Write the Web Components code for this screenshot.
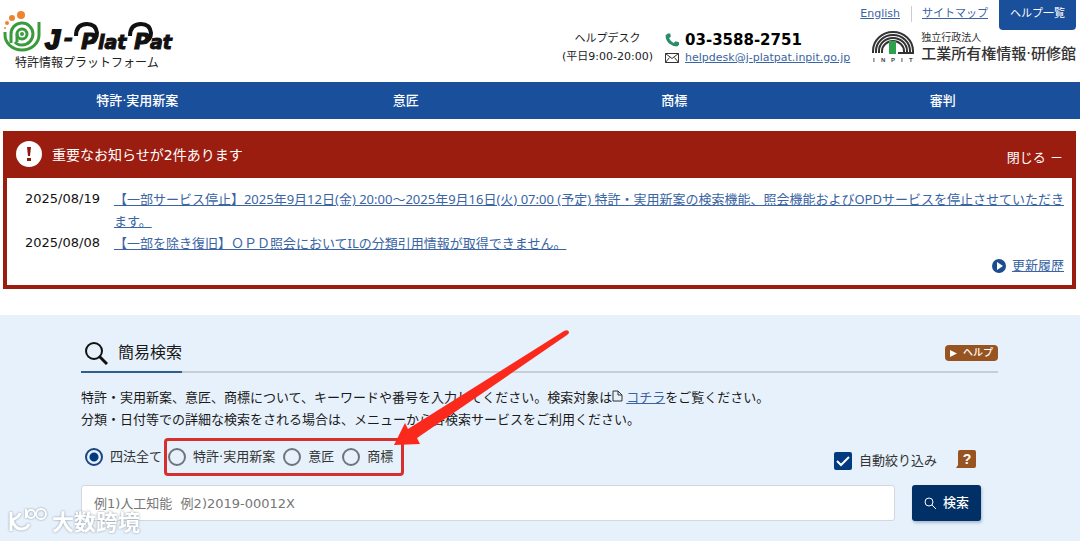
<!DOCTYPE html>
<html lang="ja">
<head>
<meta charset="UTF-8">
<meta name="viewport" content="width=device-width, initial-scale=1">
<title>J-PlatPat</title>
<style>
    :root {
        --blue: #1a4f9c;
        --navy: #003066;
        --red: #9b1d10;
        --brown: #985420;
        --link: #3a64a3;
        --pale: #e7f1fb;
    }
    body {
        margin: 0;
        font-family: "DejaVu Sans", "Noto Sans CJK JP", sans-serif;
        font-size: 13px;
        line-height: 22px;
        color: #1a1a1a;
        background: #fff;
    }
</style>
</head>
<body>
<site-header></site-header>
<site-nav></site-nav>
<main>
    <notice-panel>
        <span slot="title">重要なお知らせが2件あります</span>
        <notice-item date="2025/08/19">【一部サービス停止】2025年9月12日(金) 20:00～2025年9月16日(火) 07:00 (予定) 特許・実用新案の検索機能、照会機能およびOPDサービスを停止させていただきます。</notice-item>
        <notice-item date="2025/08/08">【一部を除き復旧】ＯＰＤ照会においてILの分類引用情報が取得できません。</notice-item>
    </notice-panel>
    <simple-search></simple-search>
</main>
<water-mark>大数跨境</water-mark>

<script>
class SiteHeader extends HTMLElement {
    connectedCallback() {
        this.attachShadow({ mode: 'open' });
        this.shadowRoot.innerHTML = `
            <style>
                :host { display: block; }
                header {
                    display: flex;
                    min-height: 82px;
                    padding: 0 4px 0 3px;
                    box-sizing: border-box;
                }
                a { color: var(--link); }
                .logo { padding-top: 10px; color: #222; text-decoration: none; }
                .logo svg { display: block; }
                .logo span {
                    display: block;
                    padding-left: 12px;
                    font-size: 12px;
                    line-height: 20px;
                }
                .desk {
                    display: flex;
                    gap: 12px;
                    margin-left: auto;
                    padding-top: 30px;
                    font-size: 11px;
                    line-height: 18px;
                }
                .hours { text-align: center; }
                .row { display: flex; align-items: center; gap: 6px; }
                .row svg { flex: none; }
                .tel { font-size: 15px; font-weight: bold; color: #000; line-height: 20px; }
                .mail { line-height: 16px; }
                .side { margin-left: 10px; }
                .links {
                    display: flex;
                    justify-content: flex-end;
                    font-size: 11px;
                    line-height: 28px;
                }
                .links a + a { margin-left: 11px; }
                .links .map {
                    padding-left: 11px;
                    background: linear-gradient(#ccc, #ccc) 0 6px / 1px 16px no-repeat;
                }
                .links .help {
                    padding: 0 11px 2px;
                    border-radius: 0 0 4px 4px;
                    background: var(--blue);
                    color: #fff;
                    text-decoration: none;
                }
                .inpit {
                    display: flex;
                    justify-content: flex-end;
                    gap: 7px;
                    color: #333;
                    text-decoration: none;
                }
                .inpit small { display: block; font-size: 10px; line-height: 15px; }
                .inpit b { display: block; font-size: 15px; line-height: 18px; font-weight: 500; white-space: nowrap; }
            </style>
            <header>
                <a class="logo" href="#" aria-label="J-PlatPat">
                    <svg width="176" height="43" viewBox="0 0 176 43">
                        <g fill="#f08332">
                            <circle cx="18" cy="5" r="4"/><circle cx="9" cy="8" r="3"/>
                            <circle cx="4" cy="13" r="2"/><circle cx="2" cy="18" r="1"/>
                        </g>
                        <g fill="none" stroke="#3a9b3d" stroke-width="3">
                            <path d="M2 22v3a17 15 0 0 0 34 0V12"/>
                            <path d="M8 33V25a11 11 0 1 1 11 10q-5 0-7-3"/>
                            <circle cx="19" cy="24" r="5"/>
                            <path d="M14 24v8"/>
                        </g>
                        <circle cx="19" cy="24" r="2" fill="#3a9b3d"/>
                        <g font-family="DejaVu Sans" font-weight="bold" font-style="italic" font-size="19" fill="#111" stroke="#111">
                            <text x="42" y="39" font-family="Liberation Sans" font-size="27" stroke-width="2">J</text>
                            <text x="61" y="36" font-size="22">-</text>
                            <text x="78" y="39" font-size="22">P</text>
                            <text x="95" y="39">lat</text>
                            <text x="131" y="39" font-size="22">P</text>
                            <text x="147" y="39">at</text>
                        </g>
                        <g fill="none" stroke="#111" stroke-width="4">
                            <path d="M73 26q0-12 11-12 9 0 10 9 0 7-7 9"/>
                            <path d="M127 26q0-12 11-12 9 0 10 9 0 7-7 9"/>
                        </g>
                    </svg>
                    <span>特許情報プラットフォーム</span>
                </a>
                <div class="desk">
                    <div class="hours">ヘルプデスク<br>(平日9:00-20:00)</div>
                    <div>
                        <div class="row tel">
                            <svg width="14" height="14" viewBox="0 0 24 24" fill="#2b8c68"><path d="M5 1 1 4q0 9 6 14 6 5 14 5l3-3v-4l-6-2-3 3q-6-3-8-8l3-3-1-5z"/></svg>
                            03-3588-2751
                        </div>
                        <div class="row mail">
                            <svg width="14" height="10" viewBox="0 0 14 10" fill="none" stroke="#333"><path d="M.5.5h13v9H.5zl6.500 5L13.500.5M.5 9.500l4-5M13.500 9.500l-4-5"/></svg>
                            <a href="mailto:helpdesk@j-platpat.inpit.go.jp">helpdesk@j-platpat.inpit.go.jp</a>
                        </div>
                    </div>
                </div>
                <div class="side">
                    <div class="links">
                        <a href="#">English</a>
                        <a class="map" href="#">サイトマップ</a>
                        <a class="help" href="#">ヘルプ一覧</a>
                    </div>
                    <a class="inpit" href="#">
                        <svg width="42" height="33" viewBox="0 0 42 33">
                            <g fill="none" stroke="#333" stroke-width="2">
                                <path d="M1 23V21a20 19 0 0 1 40 0v2"/>
                                <path d="M4 23V21a17 16 0 0 1 34 0v2"/>
                                <path d="M7 23V21a14 13 0 0 1 28 0v2"/>
                                <path d="M10 23V21a11 10 0 0 1 22 0v2"/>
                                <path d="M26 23h16"/>
                            </g>
                            <path d="M17 11h7v13h-7z" fill="#2fa04c"/>
                            <text y="32" font-family="Liberation Sans" font-weight="bold" font-size="6" fill="#444"><tspan x="1">I</tspan><tspan x="9">N</tspan><tspan x="19">P</tspan><tspan x="29">I</tspan><tspan x="37">T</tspan></text>
                        </svg>
                        <span><small>独立行政法人</small><b>工業所有権情報·研修館</b></span>
                    </a>
                </div>
            </header>
        `;
    }
}

class SiteNav extends HTMLElement {
    connectedCallback() {
        this.attachShadow({ mode: 'open' });
        this.shadowRoot.innerHTML = `
            <style>
                :host { display: block; background: var(--blue); }
                nav {
                    display: grid;
                    grid-template-columns: repeat(4, 1fr);
                    padding: 0 3px;
                }
                a {
                    color: #fff;
                    text-align: center;
                    text-decoration: none;
                    line-height: 37px;
                    font-weight: 500;
                }
            </style>
            <nav>
                <a href="#">特許·実用新案</a>
                <a href="#">意匠</a>
                <a href="#">商標</a>
                <a href="#">審判</a>
            </nav>
        `;
    }
}

class NoticePanel extends HTMLElement {
    connectedCallback() {
        this.attachShadow({ mode: 'open' });
        this.shadowRoot.innerHTML = `
            <style>
                :host {
                    display: block;
                    margin: 12px 4px 26px 3px;
                    border: 4px solid var(--red);
                }
                .head {
                    display: flex;
                    align-items: center;
                    min-height: 43px;
                    box-sizing: border-box;
                    padding: 0 9px 4px;
                    background: var(--red);
                    color: #fff;
                    font-size: 14px;
                }
                .head svg { margin-right: 9px; }
                button {
                    margin-left: auto;
                    padding: 6px 0 0;
                    border: 0;
                    background: none;
                    color: inherit;
                    font: inherit;
                    font-size: 13px;
                    cursor: pointer;
                }
                .body {
                    display: flex;
                    flex-direction: column;
                    padding: 10px 4px 8px 18px;
                }
                .more {
                    display: flex;
                    justify-content: flex-end;
                    align-items: center;
                    gap: 6px;
                    padding: 1px 4px 0 0;
                }
                a { color: var(--link); }
            </style>
            <div class="head">
                <svg width="27" height="27" viewBox="0 0 27 27"><circle cx="13" cy="13" r="13" fill="#fff"/><path d="M11 6h4l-1 9h-2zM11 17h4v3h-4z" fill="#8b1a10"/></svg>
                <slot name="title"></slot>
                <button type="button">閉じる －</button>
            </div>
            <div class="body">
                <slot></slot>
                <div class="more">
                    <svg width="14" height="14" viewBox="0 0 14 14"><circle cx="7" cy="7" r="7" fill="#1c4c8c"/><path d="M5 3l6 4-6 4z" fill="#fff"/></svg>
                    <a href="#">更新履歴</a>
                </div>
            </div>
        `;
    }
}

class NoticeItem extends HTMLElement {
    connectedCallback() {
        this.attachShadow({ mode: 'open' });
        this.shadowRoot.innerHTML = `
            <style>
                :host { display: flex; gap: 14px; }
                time { flex: none; color: #111; }
                a {
                    color: var(--link);
                    font-family: "Noto Sans", "Noto Sans CJK JP", sans-serif;
                }
            </style>
            <time>${this.getAttribute('date')}</time>
            <a href="#"><slot></slot></a>
        `;
    }
}

class SimpleSearch extends HTMLElement {
    connectedCallback() {
        this.attachShadow({ mode: 'open' });
        this.shadowRoot.innerHTML = `
            <style>
                :host {
                    display: block;
                    position: relative;
                    padding: 20px 82px 20px 81px;
                    background: var(--pale);
                }
                .title {
                    display: flex;
                    justify-content: space-between;
                    align-items: center;
                    border-bottom: 2px solid #c6cdd6;
                }
                h2 {
                    display: flex;
                    align-items: center;
                    gap: 10px;
                    margin: 0 0 -2px;
                    padding-left: 4px;
                    border-bottom: 2px solid #2f5f8f;
                    font-size: 16px;
                    font-weight: normal;
                    line-height: 36px;
                }
                .help {
                    display: flex;
                    align-items: center;
                    gap: 6px;
                    padding: 0 5px;
                    border: 0;
                    border-radius: 4px;
                    background: var(--brown);
                    color: #fff;
                    font: inherit;
                    font-size: 10px;
                    line-height: 16px;
                    font-weight: 500;
                }
                p { margin: 14px 0 11px; }
                p svg { margin-right: 3px; }
                p a { color: var(--link); }
                .options {
                    display: flex;
                    align-items: center;
                    min-height: 30px;
                    color: #333;
                }
                .options label { display: flex; align-items: center; gap: 7px; }
                .kinds {
                    position: relative;
                    display: flex;
                    gap: 8px;
                    margin-left: 6px;
                }
                /* highlight frame round the three kinds */
                .kinds::after {
                    content: '';
                    position: absolute;
                    inset: -8px -11px -8px -4px;
                    border: 3px solid #d6302e;
                    border-radius: 4px;
                    pointer-events: none;
                }
                input[type=radio] {
                    appearance: none;
                    width: 18px;
                    height: 18px;
                    margin: 0;
                    border: 2px solid #70757c;
                    border-radius: 50%;
                }
                input[type=radio]:checked {
                    border-color: #1a4482;
                    background: radial-gradient(circle, #003b80 0 4px, transparent 5px);
                }
                .all { padding-left: 4px; }
                .narrow { margin-left: auto; padding-top: 7px; }
                .check { display: grid; }
                .check > * { grid-area: 1 / 1; }
                .check svg { pointer-events: none; }
                input[type=checkbox] {
                    appearance: none;
                    width: 18px;
                    height: 18px;
                    margin: 0;
                    border-radius: 2px;
                    background: #003b80;
                }
                .hint {
                    margin: 4px 22px 0 19px;
                    padding: 0;
                    border: 0;
                    background: none;
                }
                .hint svg { display: block; overflow: visible; }
                form { display: flex; gap: 17px; margin: 13px 17px 0 0; }
                input[type=text] {
                    flex: 1;
                    min-width: 0;
                    height: 36px;
                    box-sizing: border-box;
                    padding: 0 12px;
                    border: 1px solid #d3d8de;
                    border-radius: 3px;
                    background: #fff;
                    font: inherit;
                }
                input::placeholder { color: #777; opacity: 1; }
                .go {
                    display: flex;
                    align-items: center;
                    gap: 6px;
                    padding: 0 12px;
                    border: 0;
                    border-radius: 3px;
                    background: var(--navy);
                    box-shadow: 1px 2px 3px #a9bccf;
                    color: #fff;
                    font: inherit;
                    font-weight: 500;
                }
                .arrow {
                    position: absolute;
                    left: 394px;
                    top: 13px;
                    pointer-events: none;
                }
            </style>
            <div class="title">
                <h2>
                    <svg width="23" height="23" viewBox="0 0 23 23" fill="none" stroke="#111"><circle cx="9" cy="9" r="8" stroke-width="2"/><path d="M14 14l8 8" stroke-width="3"/></svg>
                    簡易検索
                </h2>
                <button class="help" type="button"><svg width="7" height="7" viewBox="0 0 7 7"><path d="M0 0l7 3.500L0 7z" fill="#fff"/></svg>ヘルプ</button>
            </div>
            <p>
                特許・実用新案、意匠、商標について、キーワードや番号を入力してください。検索対象は<svg width="11" height="12" viewBox="0 0 11 12" fill="none" stroke="#333"><path d="M1 1h5l4 4v6H1zM6 1v4h4"/></svg><a href="#">コチラ</a>をご覧ください。<br>
                分類・日付等での詳細な検索をされる場合は、メニューから各検索サービスをご利用ください。
            </p>
            <div class="options">
                <label class="all"><input type="radio" name="kind" checked>四法全て</label>
                <div class="kinds">
                    <label><input type="radio" name="kind">特許·実用新案</label>
                    <label><input type="radio" name="kind">意匠</label>
                    <label><input type="radio" name="kind">商標</label>
                </div>
                <label class="narrow">
                    <span class="check">
                        <input type="checkbox" checked>
                        <svg width="18" height="18" viewBox="0 0 18 18" fill="none" stroke="#fff" stroke-width="2"><path d="M3 9l4 4 8-8"/></svg>
                    </span>
                    自動絞り込み
                </label>
                <button class="hint" type="button" aria-label="ヘルプ">
                    <svg width="20" height="18" viewBox="0 0 20 18"><path d="M4 0h14q2 0 2 2v14q0 2-2 2H0l2-3V2q0-2 2-2z" fill="#985420"/><text x="11" y="14" text-anchor="middle" font-family="Liberation Sans" font-weight="bold" font-size="14" fill="#fff">?</text></svg>
                </button>
            </div>
            <form>
                <input type="text" aria-label="キーワード" placeholder="例1)人工知能&nbsp; 例2)2019-00012X">
                <button class="go" type="button"><svg width="13" height="13" viewBox="0 0 13 13" fill="none" stroke="#fff"><circle cx="5" cy="5" r="4"/><path d="M8 8l4 4"/></svg>検索</button>
            </form>
            <svg class="arrow" width="176" height="120" viewBox="0 0 176 120"><path d="M0 117L11 95l3 6L170 3q4-2 5 1 0 2-2 3L23 110l3 6z" fill="#fb281c"/></svg>
        `;
    }
}

class WaterMark extends HTMLElement {
    connectedCallback() {
        this.attachShadow({ mode: 'open' });
        this.shadowRoot.innerHTML = `
            <style>
                :host {
                    position: fixed;
                    left: 9px;
                    bottom: 7px;
                    display: flex;
                    align-items: center;
                    gap: 4px;
                    color: #fff;
                    font: bold 22px/28px "Noto Sans CJK SC", sans-serif;
                    filter: drop-shadow(0 0 1px #8a97a5);
                    pointer-events: none;
                }
            </style>
            <svg width="39" height="28" viewBox="0 0 39 28" fill="none" stroke="#fff" stroke-width="3">
                <path d="M2 6v19M11 7q-1 4-8 7 3 9 9 9 6 0 8-5"/>
                <path d="M17 3v9" stroke-width="2"/>
                <circle cx="22" cy="8" r="4" stroke-width="2"/><circle cx="32" cy="8" r="5" stroke-width="2"/>
            </svg>
            <slot></slot>
        `;
    }
}

customElements.define('site-header', SiteHeader);
customElements.define('site-nav', SiteNav);
customElements.define('notice-item', NoticeItem);
customElements.define('notice-panel', NoticePanel);
customElements.define('simple-search', SimpleSearch);
customElements.define('water-mark', WaterMark);
</script>
</body>
</html>
